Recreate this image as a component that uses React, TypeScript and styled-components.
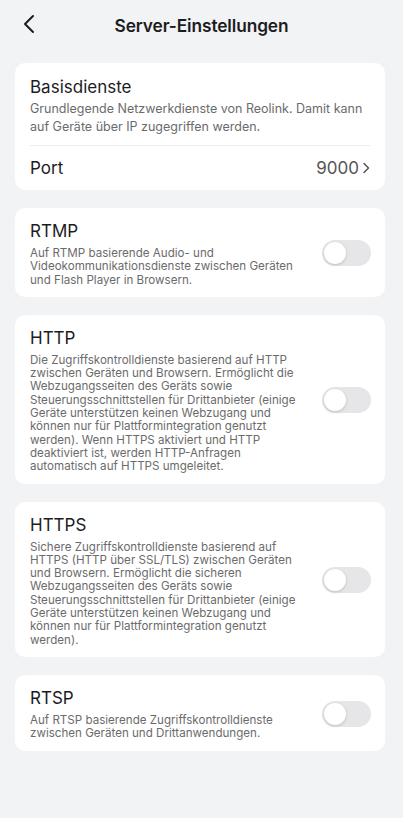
import React, { useState } from 'react'
import styled, { createGlobalStyle } from 'styled-components'

const GlobalStyle = createGlobalStyle`
  html, body {
    margin: 0;
    padding: 0;
    background: #f2f3f5;
  }
  body {
    font-family: Inter, "Noto Sans", "Liberation Sans", sans-serif;
    color: #1c1c1e;
    -webkit-font-smoothing: antialiased;
  }
`

const Page = styled.div`
  min-height: 818px;
  background: #f2f3f5;
  padding: 0 18px 40px 15px;
  box-sizing: border-box;
`

const Header = styled.header`
  height: 50px;
  display: flex;
  align-items: center;
  justify-content: center;
  position: relative;
  margin-bottom: 13px;
`

const BackButton = styled.button`
  position: absolute;
  left: 2px;
  top: 12px;
  width: 24px;
  height: 24px;
  padding: 0;
  border: none;
  background: none;
  display: flex;
  align-items: center;
  justify-content: center;
  cursor: pointer;
`

const Title = styled.h1`
  margin: 0 0 0 3px;
  font-size: 17.3px;
  font-weight: 600;
  letter-spacing: -0.1px;
  color: #1c1c1e;
`

const List = styled.div`
  display: flex;
  flex-direction: column;
  gap: 18px;
`

const Card = styled.section<{ $pad?: string }>`
  background: #ffffff;
  border-radius: 10px;
  padding: ${(p) => p.$pad || '12px 15px 10px'};
`

const CardTitle = styled.div`
  font-size: 17px;
  line-height: 22px;
  font-weight: 400;
  color: #1c1c1e;
`

const IntroText = styled.p`
  margin: 2px 0 0;
  font-size: 12.5px;
  line-height: 18px;
  color: #6b6b6b;
`

const Divider = styled.div`
  height: 1px;
  background: #ececec;
  margin-top: 9px;
`

const PortRow = styled.div`
  height: 44px;
  display: flex;
  align-items: center;
  justify-content: space-between;
  font-size: 17px;
`

const PortValue = styled.span`
  display: flex;
  align-items: center;
  gap: 3px;
  color: #555;
  font-size: 17px;
`

const ServiceRow = styled.div`
  display: flex;
  align-items: center;
  gap: 12px;
`

const ServiceText = styled.div`
  width: 268px;
  flex-shrink: 0;
`

const Desc = styled.p`
  margin: 5px 0 0;
  font-size: 11.6px;
  line-height: 13.3px;
  color: #6b6b6b;
`

const Spacer = styled.div`
  flex: 1;
`

const Toggle = styled.button<{ $on: boolean }>`
  width: 49px;
  height: 26px;
  border-radius: 13px;
  border: none;
  padding: 0;
  position: relative;
  flex-shrink: 0;
  background: ${(p) => (p.$on ? '#3478f6' : '#e6e6e8')};
  cursor: pointer;
  transition: background 0.2s;

  &::after {
    content: '';
    position: absolute;
    top: 2px;
    left: ${(p) => (p.$on ? '25px' : '2px')};
    width: 22px;
    height: 22px;
    border-radius: 50%;
    background: #fff;
    box-shadow: 0 1px 3px rgba(0, 0, 0, 0.18);
    transition: left 0.2s;
  }
`

const services = [
  {
    key: 'rtmp',
    name: 'RTMP',
    text: 'Auf RTMP basierende Audio- und Videokommunikationsdienste zwischen Geräten und Flash Player in Browsern.',
  },
  {
    key: 'http',
    name: 'HTTP',
    text: 'Die Zugriffskontrolldienste basierend auf HTTP zwischen Geräten und Browsern. Ermöglicht die Webzugangsseiten des Geräts sowie Steuerungsschnittstellen für Drittanbieter (einige Geräte unterstützen keinen Webzugang und können nur für Plattformintegration genutzt werden). Wenn HTTPS aktiviert und HTTP deaktiviert ist, werden HTTP-Anfragen automatisch auf HTTPS umgeleitet.',
  },
  {
    key: 'https',
    name: 'HTTPS',
    text: 'Sichere Zugriffskontrolldienste basierend auf HTTPS (HTTP über SSL/TLS) zwischen Geräten und Browsern. Ermöglicht die sicheren Webzugangsseiten des Geräts sowie Steuerungsschnittstellen für Drittanbieter (einige Geräte unterstützen keinen Webzugang und können nur für Plattformintegration genutzt werden).',
  },
  {
    key: 'rtsp',
    name: 'RTSP',
    text: 'Auf RTSP basierende Zugriffskontrolldienste zwischen Geräten und Drittanwendungen.',
  },
]

export default function App() {
  const [enabled, setEnabled] = useState<Record<string, boolean>>({})

  const flip = (key: string) => setEnabled({ ...enabled, [key]: !enabled[key] })

  return (
    <Page>
      <GlobalStyle />
      <Header>
        <BackButton aria-label="Zurück">
          <svg width="14" height="20" viewBox="0 0 14 20" fill="none">
            <path d="M11 2L3 10l8 8" stroke="#1c1c1e" strokeWidth="2" strokeLinecap="round" strokeLinejoin="round" />
          </svg>
        </BackButton>
        <Title>Server-Einstellungen</Title>
      </Header>

      <List>
        <Card $pad="13px 15px 0">
          <CardTitle>Basisdienste</CardTitle>
          <IntroText>
            Grundlegende Netzwerkdienste von Reolink. Damit kann auf Geräte über IP zugegriffen werden.
          </IntroText>
          <Divider />
          <PortRow>
            <span>Port</span>
            <PortValue>
              9000
              <svg width="8" height="12" viewBox="0 0 8 12" fill="none">
                <path d="M2 1.5L6.5 6 2 10.5" stroke="#555" strokeWidth="1.5" strokeLinecap="round" strokeLinejoin="round" />
              </svg>
            </PortValue>
          </PortRow>
        </Card>

        {services.map((s) => (
          <Card key={s.key}>
            <ServiceRow>
              <ServiceText>
                <CardTitle>{s.name}</CardTitle>
                <Desc>{s.text}</Desc>
              </ServiceText>
              <Spacer />
              <Toggle $on={!!enabled[s.key]} onClick={() => flip(s.key)} aria-label={s.name} />
            </ServiceRow>
          </Card>
        ))}
      </List>
    </Page>
  )
}
